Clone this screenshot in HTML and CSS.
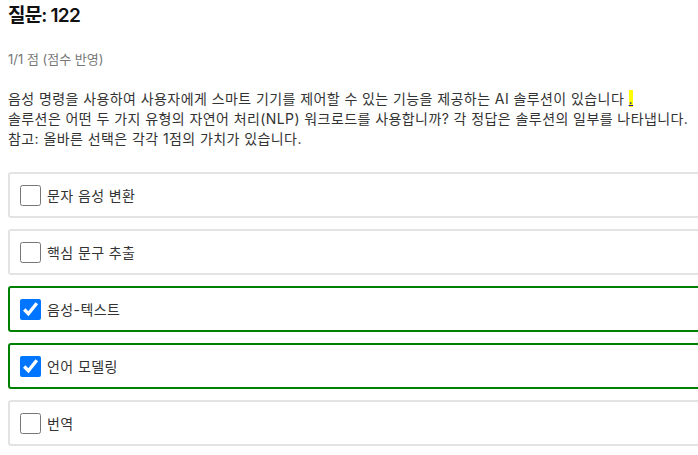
FILE: index.html
```html
<!DOCTYPE html>
<html lang="ko">
<head>
<meta charset="utf-8">
<link rel="stylesheet" href="styles.css">
</head>
<body>
<div class="page">
  <h2 class="title">질문: 122</h2>
  <div class="score">1/1 점 (점수 반영)</div>
  <p class="question">음성 명령을 사용하여 사용자에게 스마트 기기를 제어할 수 있는 기능을 제공하는 AI 솔루션이 있습니다 <span class="mark"><a class="dot" href="#">.</a></span><br>솔루션은 어떤 두 가지 유형의 자연어 처리(NLP) 워크로드를 사용합니까? 각 정답은 솔루션의 일부를 나타냅니다.<br>참고: 올바른 선택은 각각 1점의 가치가 있습니다.</p>
  <div class="options">
    <label class="option"><input type="checkbox"><span>문자 음성 변환</span></label>
    <label class="option"><input type="checkbox"><span>핵심 문구 추출</span></label>
    <label class="option correct"><input type="checkbox" checked><span>음성-텍스트</span></label>
    <label class="option correct"><input type="checkbox" checked><span>언어 모델링</span></label>
    <label class="option"><input type="checkbox"><span>번역</span></label>
  </div>
</div>
</body>
</html>
```
FILE: styles.css
```css
html, body {
  margin: 0;
  padding: 0;
  background: #ffffff;
}
body {
  font-family: "Inter", "Noto Sans CJK KR", sans-serif;
  color: #333333;
  overflow: hidden;
}
.page {
  padding: 2px 0 0 8px;
}
.title {
  margin: 0;
  font-size: 19px;
  line-height: 28px;
  font-weight: 600;
  letter-spacing: -0.8px;
  color: #111111;
}
.score {
  margin-top: 19px;
  font-size: 13px;
  line-height: 20px;
  color: #777777;
}
.question {
  margin: 20px 0 0 0;
  font-size: 14px;
  line-height: 20px;
  letter-spacing: 0.42px;
  color: #333333;
  white-space: nowrap;
}
.mark {
  background: #ffff00;
}
.dot {
  color: #1a0dab;
  text-decoration: underline;
}
.options {
  margin-top: 23px;
  display: flex;
  flex-direction: column;
  gap: 11px;
}
.option {
  box-sizing: border-box;
  height: 46px;
  width: calc(100% + 20px);
  display: flex;
  align-items: center;
  gap: 6px;
  padding: 0 10px;
  border: 2px solid #e3e3e3;
  border-radius: 3px;
  font-size: 14px;
  letter-spacing: 0.4px;
  color: #333333;
}
.option.correct {
  border-color: #008000;
}
.option input {
  margin: 0;
  width: 21px;
  height: 21px;
}
```
